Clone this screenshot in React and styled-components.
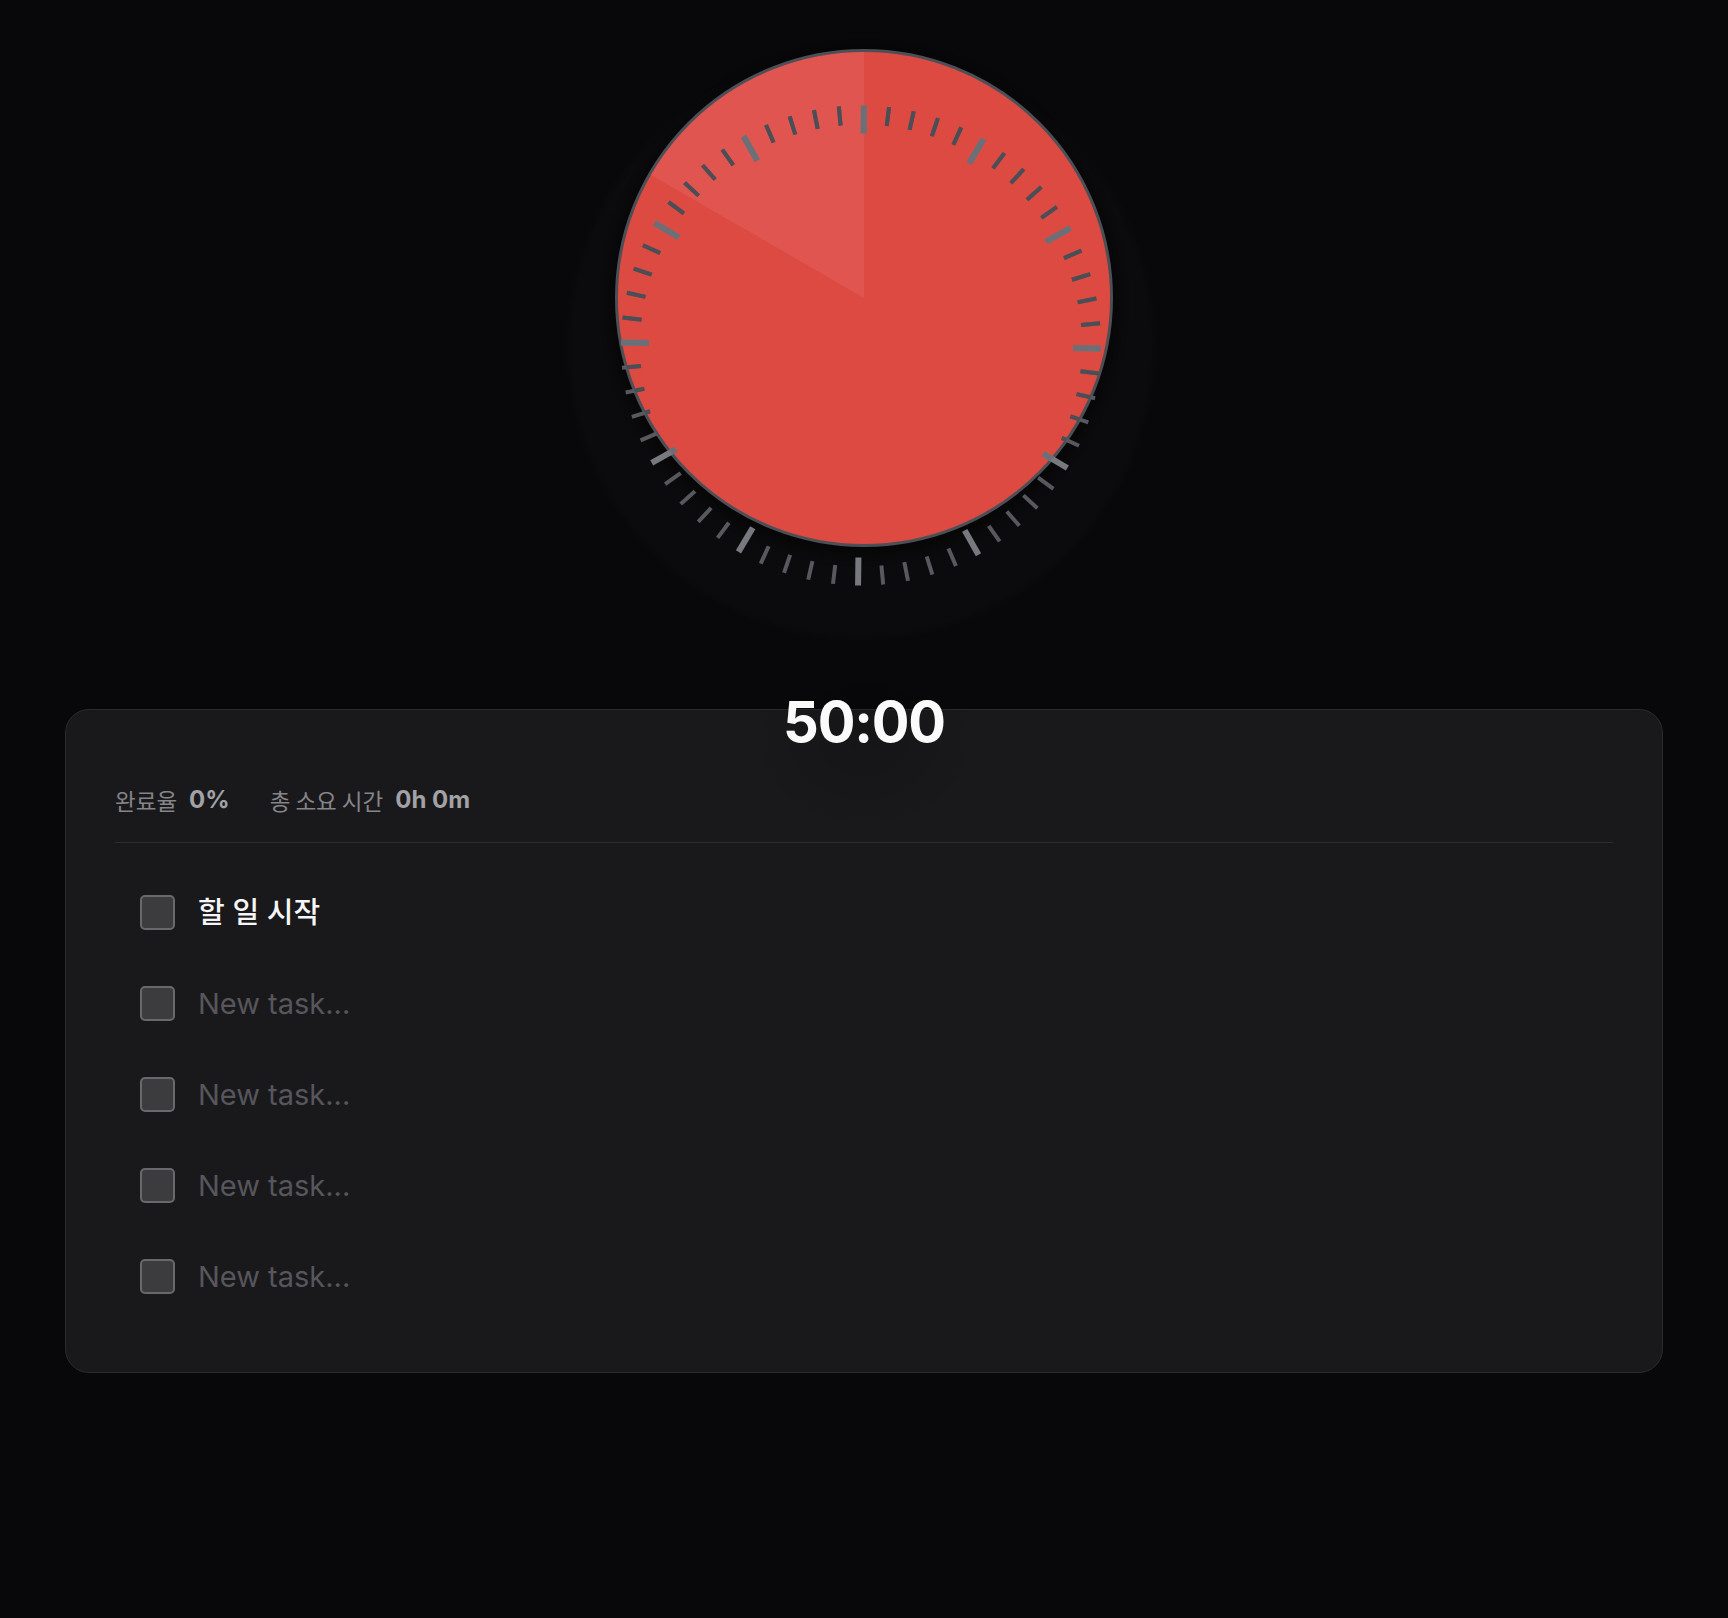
import React from "react";
import styled, { createGlobalStyle } from "styled-components";

const GlobalStyle = createGlobalStyle`
  html, body {
    margin: 0;
    padding: 0;
    background: #08080a;
  }
  body {
    font-family: Inter, "Noto Sans CJK KR", "Noto Sans", sans-serif;
    color: #f5f5f7;
    min-height: 100vh;
  }
  * { box-sizing: border-box; }
`;

const Page = styled.main`
  display: flex;
  flex-direction: column;
  align-items: center;
  padding: 20px 65px 0;
  min-height: 100vh;
`;

const DialSvg = styled.svg`
  display: block;
  width: 640px;
  height: 640px;
  flex-shrink: 0;
`;

const TimeLabel = styled.div`
  position: relative;
  z-index: 1;
  margin-top: 34px;
  margin-bottom: -41px;
  font-family: Inter, sans-serif;
  font-weight: 700;
  font-size: 56px;
  line-height: 56px;
  height: 56px;
  color: #fafafa;
  letter-spacing: -1.2px;
  &::before {
    content: "";
    position: absolute;
    left: 50%;
    top: 50%;
    width: 240px;
    height: 190px;
    transform: translate(-50%, -40%);
    background: radial-gradient(closest-side, rgba(0, 0, 0, 0.16), rgba(0, 0, 0, 0));
    z-index: -1;
  }
`;

const Card = styled.section`
  align-self: stretch;
  background: #19191b;
  border: 1px solid #2b2b2e;
  border-radius: 24px;
  padding: 75px 49px 50px;
`;

const StatsRow = styled.div`
  display: flex;
  align-items: center;
  gap: 40px;
  height: 58px;
  padding-bottom: 28px;
  border-bottom: 1px solid #2c2c2f;
`;

const Stat = styled.div`
  display: flex;
  align-items: center;
  gap: 12px;
  height: 30px;
`;

const StatLabel = styled.span`
  font-family: "Noto Sans CJK KR", sans-serif;
  font-size: 22.5px;
  color: #85858a;
`;

const StatValue = styled.span`
  font-family: Inter, sans-serif;
  font-weight: 700;
  font-size: 24px;
  color: #a1a1a6;
`;

const TaskList = styled.ul`
  list-style: none;
  margin: 0;
  padding: 24px 0 0;
`;

const TaskRow = styled.li`
  display: flex;
  align-items: center;
  gap: 23px;
  height: 91px;
  padding-left: 25px;
`;

const CheckBox = styled.span`
  width: 35px;
  height: 35px;
  flex-shrink: 0;
  border: 2px solid #69696d;
  background: #3c3c3f;
  border-radius: 5px;
`;

const TaskInput = styled.input`
  flex: 1;
  background: transparent;
  border: none;
  outline: none;
  padding: 0 0 ${(p) => (p.$filled ? "5px" : "0")};
  font-family: Inter, "Noto Sans CJK KR", sans-serif;
  font-size: 29px;
  font-weight: ${(p) => (p.$filled ? 500 : 400)};
  color: #f5f5f7;
  &::placeholder {
    color: #56565c;
  }
`;

const DISK = { cx: 320, cy: 278, r: 247.5 };
const RING = { cx: 317, cy: 325.5, r: 240 };

function buildTicks() {
  const ticks = [];
  for (let i = 0; i < 60; i++) {
    const major = i % 5 === 0;
    const len = major ? 28 : 19;
    const a = (i * 6 * Math.PI) / 180;
    const s = Math.sin(a);
    const c = Math.cos(a);
    const r1 = RING.r - len;
    const r2 = RING.r;
    ticks.push({
      key: i,
      major,
      x1: RING.cx + r1 * s,
      y1: RING.cy - r1 * c,
      x2: RING.cx + r2 * s,
      y2: RING.cy - r2 * c,
    });
  }
  return ticks;
}

function wedgePath(startDeg, endDeg) {
  const { cx, cy } = DISK;
  const r = DISK.r;
  const p = (deg) => {
    const a = (deg * Math.PI) / 180;
    return [cx + r * Math.sin(a), cy - r * Math.cos(a)];
  };
  const [sx, sy] = p(startDeg);
  const [ex, ey] = p(endDeg);
  const large = endDeg - startDeg > 180 ? 1 : 0;
  return `M ${cx} ${cy} L ${sx} ${sy} A ${r} ${r} 0 ${large} 1 ${ex} ${ey} Z`;
}

function Ticks({ minor, major }) {
  return buildTicks().map((t) => (
    <line
      key={t.key}
      x1={t.x1}
      y1={t.y1}
      x2={t.x2}
      y2={t.y2}
      stroke={t.major ? major : minor}
      strokeWidth={t.major ? 6 : 4}
    />
  ));
}

function Dial() {
  return (
    <DialSvg viewBox="0 0 640 640" aria-hidden="true">
      <defs>
        <radialGradient id="halo" cx="50%" cy="50%" r="50%">
          <stop offset="0%" stopColor="#0c0c0e" />
          <stop offset="97%" stopColor="#0b0b0d" />
          <stop offset="100%" stopColor="#08080a" />
        </radialGradient>
        <filter id="blur" x="-20%" y="-20%" width="140%" height="140%">
          <feGaussianBlur stdDeviation="9" />
        </filter>
        <clipPath id="diskClip">
          <circle cx={DISK.cx} cy={DISK.cy} r={DISK.r} />
        </clipPath>
      </defs>
      <circle cx={RING.cx} cy={RING.cy} r="297" fill="url(#halo)" />
      <circle cx={DISK.cx} cy={DISK.cy + 4} r={DISK.r + 6} fill="rgba(0,0,0,0.55)" filter="url(#blur)" />
      <circle cx={DISK.cx} cy={DISK.cy} r={DISK.r} fill="#dc4a42" />
      <path d={wedgePath(-60, 0)} fill="#e0554f" />
      <circle cx={DISK.cx} cy={DISK.cy} r={DISK.r} fill="none" stroke="#4d4f56" strokeWidth="3" />
      <g transform={`rotate(0.7 ${RING.cx} ${RING.cy})`}>
        <Ticks minor="#57595f" major="#77797f" />
      </g>
      <g clipPath="url(#diskClip)">
        <g transform={`rotate(0.7 ${RING.cx} ${RING.cy})`}>
          <Ticks minor="#4c4e55" major="#6d6f76" />
        </g>
      </g>
    </DialSvg>
  );
}

const tasks = ["할 일 시작", "", "", "", ""];

export default function App() {
  return (
    <>
      <GlobalStyle />
      <Page>
        <Dial />
        <TimeLabel>50:00</TimeLabel>
        <Card>
          <StatsRow>
            <Stat>
              <StatLabel>완료율</StatLabel>
              <StatValue>0%</StatValue>
            </Stat>
            <Stat>
              <StatLabel>총 소요 시간</StatLabel>
              <StatValue>0h 0m</StatValue>
            </Stat>
          </StatsRow>
          <TaskList>
            {tasks.map((t, i) => (
              <TaskRow key={i}>
                <CheckBox />
                <TaskInput
                  $filled={!!t}
                  defaultValue={t}
                  placeholder="New task..."
                  readOnly
                />
              </TaskRow>
            ))}
          </TaskList>
        </Card>
      </Page>
    </>
  );
}
